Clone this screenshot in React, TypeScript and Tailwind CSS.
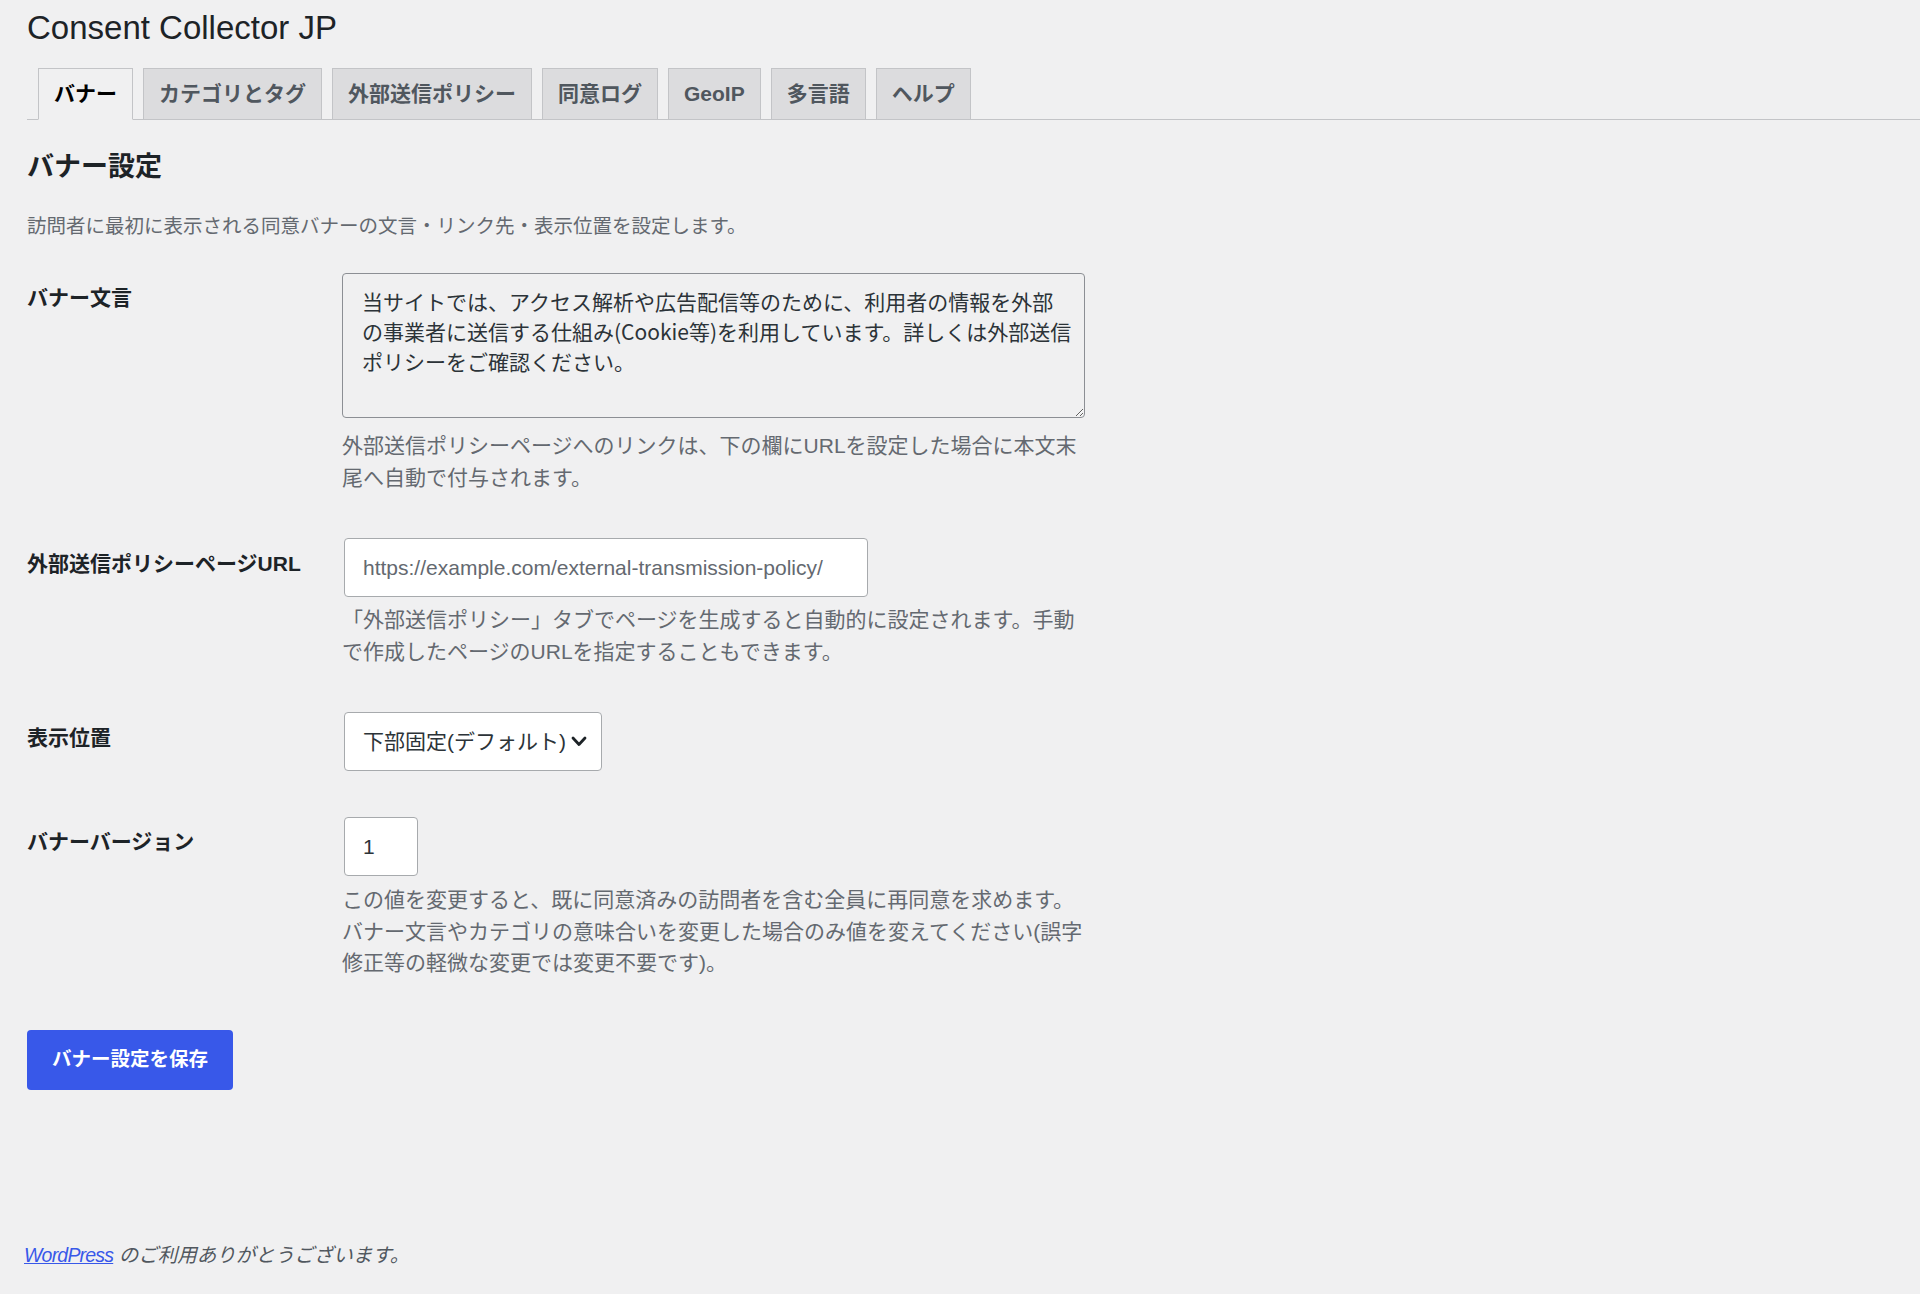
import React from "react";
import clsx from "clsx";

const tabs = ["バナー", "カテゴリとタグ", "外部送信ポリシー", "同意ログ", "GeoIP", "多言語", "ヘルプ"];

const bannerText =
  "当サイトでは、アクセス解析や広告配信等のために、利用者の情報を外部の事業者に送信する仕組み(Cookie等)を利用しています。詳しくは外部送信ポリシーをご確認ください。";

const FieldLabel = ({ children }: { children: React.ReactNode }) => (
  <div className="w-[315px] shrink-0 pt-[33.5px] text-[21px] font-semibold leading-[27px] text-[#1d2327]">
    {children}
  </div>
);

const Help = ({ children, className }: { children: React.ReactNode; className?: string }) => (
  <p className={clsx("text-[21px] leading-[31.5px] text-[#646970]", className)}>{children}</p>
);

export default function App() {
  return (
    <div className="flex h-[1294px] flex-col bg-[#f0f0f1] font-['Liberation_Sans','Noto_Sans_CJK_JP',sans-serif] text-[#1d2327]">
      <div className="pl-[27px] pt-[6px]">
        <h1 className="text-[33px] font-normal leading-[43px]">Consent Collector JP</h1>

        <nav className="mt-[19px] flex gap-[10px] border-b border-[#c3c4c7] pl-[11px]">
          {tabs.map((t, i) => (
            <a
              key={t}
              href="#"
              className={clsx(
                "-mb-px h-[52px] border border-[#c3c4c7] px-[15px] text-[21px] font-semibold leading-[50px]",
                i === 0 ? "border-b-[#f0f0f1] bg-[#f0f0f1] text-black" : "bg-[#dcdcde] text-[#50575e]"
              )}
            >
              {t}
            </a>
          ))}
        </nav>

        <h2 className="mt-[30px] text-[27px] font-semibold leading-[35px]">バナー設定</h2>
        <p className="mt-[27px] text-[19.5px] leading-[29px] text-[#646970]">
          訪問者に最初に表示される同意バナーの文言・リンク先・表示位置を設定します。
        </p>

        <div className="mt-[9px]">
          {/* バナー文言 */}
          <div className="flex">
            <FieldLabel>バナー文言</FieldLabel>
            <div className="max-w-[748px] flex-1 pb-[23px] pt-[23px]">
              <textarea
                defaultValue={bannerText}
                className="block h-[145px] w-[743px] rounded-[4px] border border-[#8c8f94] bg-[#f0f0f1] pl-[19px] pr-[12px] pt-[12px] font-['Noto_Sans_CJK_JP',sans-serif] text-[21px] leading-[30px] text-[#2c3338]"
              />
              <Help className="mt-[12px]">
                外部送信ポリシーページへのリンクは、下の欄にURLを設定した場合に本文末尾へ自動で付与されます。
              </Help>
            </div>
          </div>

          {/* URL */}
          <div className="flex">
            <FieldLabel>外部送信ポリシーページURL</FieldLabel>
            <div className="max-w-[748px] flex-1 pb-[23px] pt-[22px]">
              <input
                type="text"
                placeholder="https://example.com/external-transmission-policy/"
                className="ml-[2px] block h-[59px] w-[524px] rounded-[4px] border border-[#a7aaad] bg-white pl-[18px] text-[21px] text-[#2c3338] placeholder:text-[#646970]"
              />
              <Help className="mt-[7px]">
                「外部送信ポリシー」タブでページを生成すると自動的に設定されます。手動で作成したページのURLを指定することもできます。
              </Help>
            </div>
          </div>

          {/* 表示位置 */}
          <div className="flex">
            <FieldLabel>表示位置</FieldLabel>
            <div className="max-w-[748px] flex-1 pb-[23px] pt-[22px]">
              <div className="relative ml-[2px] w-[258px]">
                <select
                  defaultValue="bottom"
                  className="block h-[59px] w-[258px] appearance-none rounded-[4px] border border-[#a7aaad] bg-white pl-[18px] text-[21px] text-[#2c3338]"
                >
                  <option value="bottom">下部固定(デフォルト)</option>
                  <option value="top">上部固定</option>
                  <option value="modal">モーダル</option>
                </select>
                <svg
                  className="pointer-events-none absolute right-[15px] top-[24px]"
                  width="16"
                  height="11"
                  viewBox="0 0 16 11"
                  fill="none"
                >
                  <path d="M2 2 L8 8.5 L14 2" stroke="#1d2327" strokeWidth="2.8" strokeLinecap="round" strokeLinejoin="round" />
                </svg>
              </div>
            </div>
          </div>

          {/* バナーバージョン */}
          <div className="flex">
            <FieldLabel>バナーバージョン</FieldLabel>
            <div className="max-w-[748px] flex-1 pb-[23px] pt-[23px]">
              <input
                type="text"
                defaultValue="1"
                className="ml-[2px] block h-[59px] w-[74px] rounded-[4px] border border-[#a7aaad] bg-white pl-[18px] text-[21px] text-[#2c3338]"
              />
              <Help className="mt-[8px]">
                この値を変更すると、既に同意済みの訪問者を含む全員に再同意を求めます。
                <br />
                バナー文言やカテゴリの意味合いを変更した場合のみ値を変えてください(誤字修正等の軽微な変更では変更不要です)。
              </Help>
            </div>
          </div>
        </div>

        <button className="mt-[28.5px] h-[60px] rounded-[4px] bg-[#3858e9] px-[25px] text-[19.5px] font-semibold text-white">
          バナー設定を保存
        </button>
      </div>

      <footer className="mt-auto pb-[24.5px] pl-[24px] text-[19.5px] italic leading-[29px] text-[#50575e]">
        <a href="#" className="tracking-[-0.8px] text-[#3858e9] underline">
          WordPress
        </a>{" "}
        のご利用ありがとうございます。
      </footer>
    </div>
  );
}
